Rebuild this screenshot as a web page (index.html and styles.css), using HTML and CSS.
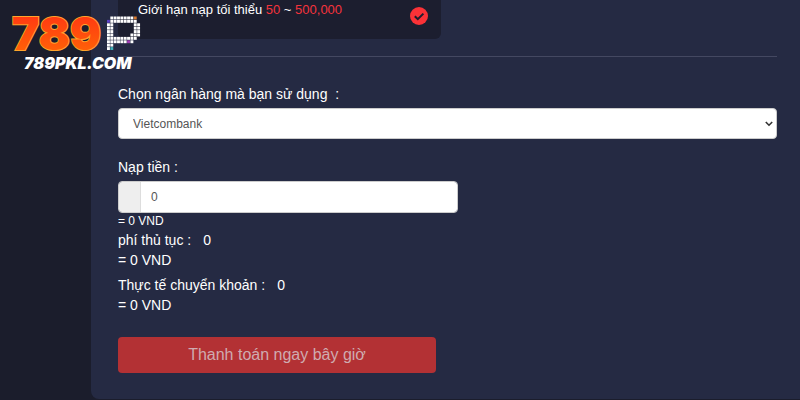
FILE: index.html
```html
<!DOCTYPE html>
<html lang="vi">

<head>
    <meta charset="UTF-8" />
    <meta name="viewport" content="width=device-width, initial-scale=1.0" />
    <title>Nạp tiền</title>
    <link rel="stylesheet" href="styles.css">
</head>

<body>
    <a class="logo" href="#" aria-label="789P">
        <svg class="logo-mark" width="132" height="38" viewBox="0 0 132 38">
            <defs>
                <linearGradient id="fire" x1="0" y1="0" x2="0" y2="1">
                    <stop offset="0.2" stop-color="#ff3a12" />
                    <stop offset="0.8" stop-color="#ff5f08" />
                </linearGradient>
            </defs>
            <text class="logo-digits" x="0" y="35">789</text>
            <g id="pixels"></g>
        </svg>
        <span class="logo-site">789PKL.COM</span>
    </a>

    <main class="panel">
        <div class="limit-card">
            <p>Giới hạn nạp tối thiểu <span class="amount">50</span> ~ <span class="amount">500,000</span></p>
            <svg class="check" width="18" height="18" viewBox="0 0 18 18">
                <circle cx="9" cy="9" r="9" fill="#fb3237" />
                <path d="M4.8 9.2l3 3 5.6-5.6" fill="none" stroke="#1c1e2f" stroke-width="2" />
            </svg>
        </div>

        <form class="deposit-form" id="depositForm">
            <label for="bank">Chọn ngân hàng mà bạn sử dụng&nbsp; :</label>
            <div class="select-wrap">
                <select id="bank">
                    <option>Vietcombank</option>
                </select>
                <svg class="arrow" width="8" height="6" viewBox="0 0 8 6">
                    <path d="M0.8 1l3.2 3.2L7.2 1" fill="none" stroke="#333" stroke-width="1.6" />
                </svg>
            </div>

            <label for="amount">Nạp tiền :</label>
            <div class="input-group">
                <span class="addon"></span>
                <input type="text" id="amount" value="0" />
            </div>
            <p class="hint">= 0 VND</p>

            <div class="summary">
                <p>phí thủ tục :<span class="value">0</span></p>
                <p>= 0 VND</p>
            </div>
            <div class="summary">
                <p>Thực tế chuyển khoản :<span class="value">0</span></p>
                <p>= 0 VND</p>
            </div>

            <button type="submit" class="pay-btn">Thanh toán ngay bây giờ</button>
        </form>
    </main>

    <script>
        const rows = [
            ".########.",
            "#########.",
            "##......##",
            "##......##",
            "##......##",
            "##.....###",
            "#########.",
            "########..",
            "##........",
            "##........",
        ];
        const tints = { "0,8": "#d9792f", "1,0": "#5b3fc4", "7,6": "#a23fb5", "9,1": "#3fb0b8" };

        const pixels = document.getElementById("pixels");
        rows.forEach((row, y) => {
            [...row].forEach((cell, x) => {
                if (cell !== "#") return;
                const rect = document.createElementNS("http://www.w3.org/2000/svg", "rect");
                rect.setAttribute("x", 95 + x * 3.35);
                rect.setAttribute("y", 1.5 + y * 3.4);
                rect.setAttribute("width", 2.9);
                rect.setAttribute("height", 2.9);
                rect.setAttribute("fill", tints[`${y},${x}`] || "#fff");
                pixels.appendChild(rect);
            });
        });

        document.getElementById("depositForm").addEventListener("submit", function (e) {
            e.preventDefault();
        });
    </script>
</body>

</html>
```

FILE: styles.css
```css
:root {
    --bg-dark: #1b1d2c;
    --panel: #252a43;
    --card: #1c1e2f;
    --red: #f5333c;
    --button: #b33134;
}

* {
    margin: 0;
    padding: 0;
    box-sizing: border-box;
    font-family: "Liberation Sans", Arial, sans-serif;
}

body {
    min-height: 100vh;
    background: var(--bg-dark);
    color: #fff;
    font-size: 14px;
    line-height: 20px;
    padding: 0 0 2px 91px;
    display: flex;
}

.logo {
    position: absolute;
    top: 15px;
    left: 12px;
    display: flex;
    flex-direction: column;
    color: #fff;
    text-decoration: none;
}

.logo-mark {
    overflow: visible;
}

.logo-digits {
    font-family: Inter, sans-serif;
    font-size: 46px;
    font-weight: 900;
    fill: url(#fire);
    stroke: #ffa42b;
    stroke-width: 2;
    paint-order: stroke;
}

.logo-site {
    padding-left: 12px;
    font-family: Inter, sans-serif;
    font-size: 16px;
    font-weight: 900;
    font-style: italic;
}

.panel {
    flex: 1;
    background: var(--panel);
    border-radius: 0 0 0 8px;
    padding: 0 23px 26px 27px;
}

.limit-card {
    width: 49%;
    height: 39px;
    padding: 0 13px 0 20px;
    background: var(--card);
    border-radius: 0 0 6px 6px;
    display: flex;
    justify-content: space-between;
    font-size: 13px;
}

.amount {
    color: var(--red);
}

.check {
    margin-top: 7px;
}

.deposit-form {
    margin-top: 17px;
    padding-top: 27px;
    border-top: 1px solid #444861;
    display: flex;
    flex-direction: column;
}

label {
    margin-bottom: 4px;
}

.select-wrap {
    position: relative;
    margin-bottom: 18px;
}

select {
    width: 100%;
    height: 31px;
    padding: 0 14px;
    appearance: none;
    background: #fff;
    color: #555;
    border: 1px solid #ccc;
    border-radius: 4px;
    font-size: 12px;
}

.arrow {
    position: absolute;
    top: 13px;
    right: 4px;
    pointer-events: none;
}

.input-group {
    width: 340px;
    max-width: 100%;
    height: 32px;
    display: flex;
    border: 1px solid #ccc;
    border-radius: 4px;
    overflow: hidden;
}

.addon {
    width: 22px;
    background: #eee;
    border-right: 1px solid #ddd;
}

.input-group input {
    flex: 1;
    min-width: 0;
    padding: 0 10px;
    border: none;
    background: #fff;
    color: #555;
    font-size: 12px;
}

.hint {
    font-size: 12px;
    line-height: 17px;
}

.summary {
    margin-bottom: 5px;
}

.value {
    margin-left: 12px;
}

.pay-btn {
    width: 318px;
    max-width: 100%;
    height: 36px;
    margin-top: 17px;
    border: none;
    border-radius: 4px;
    background: var(--button);
    color: #cfabb0;
    font-size: 16px;
    cursor: pointer;
}
```
